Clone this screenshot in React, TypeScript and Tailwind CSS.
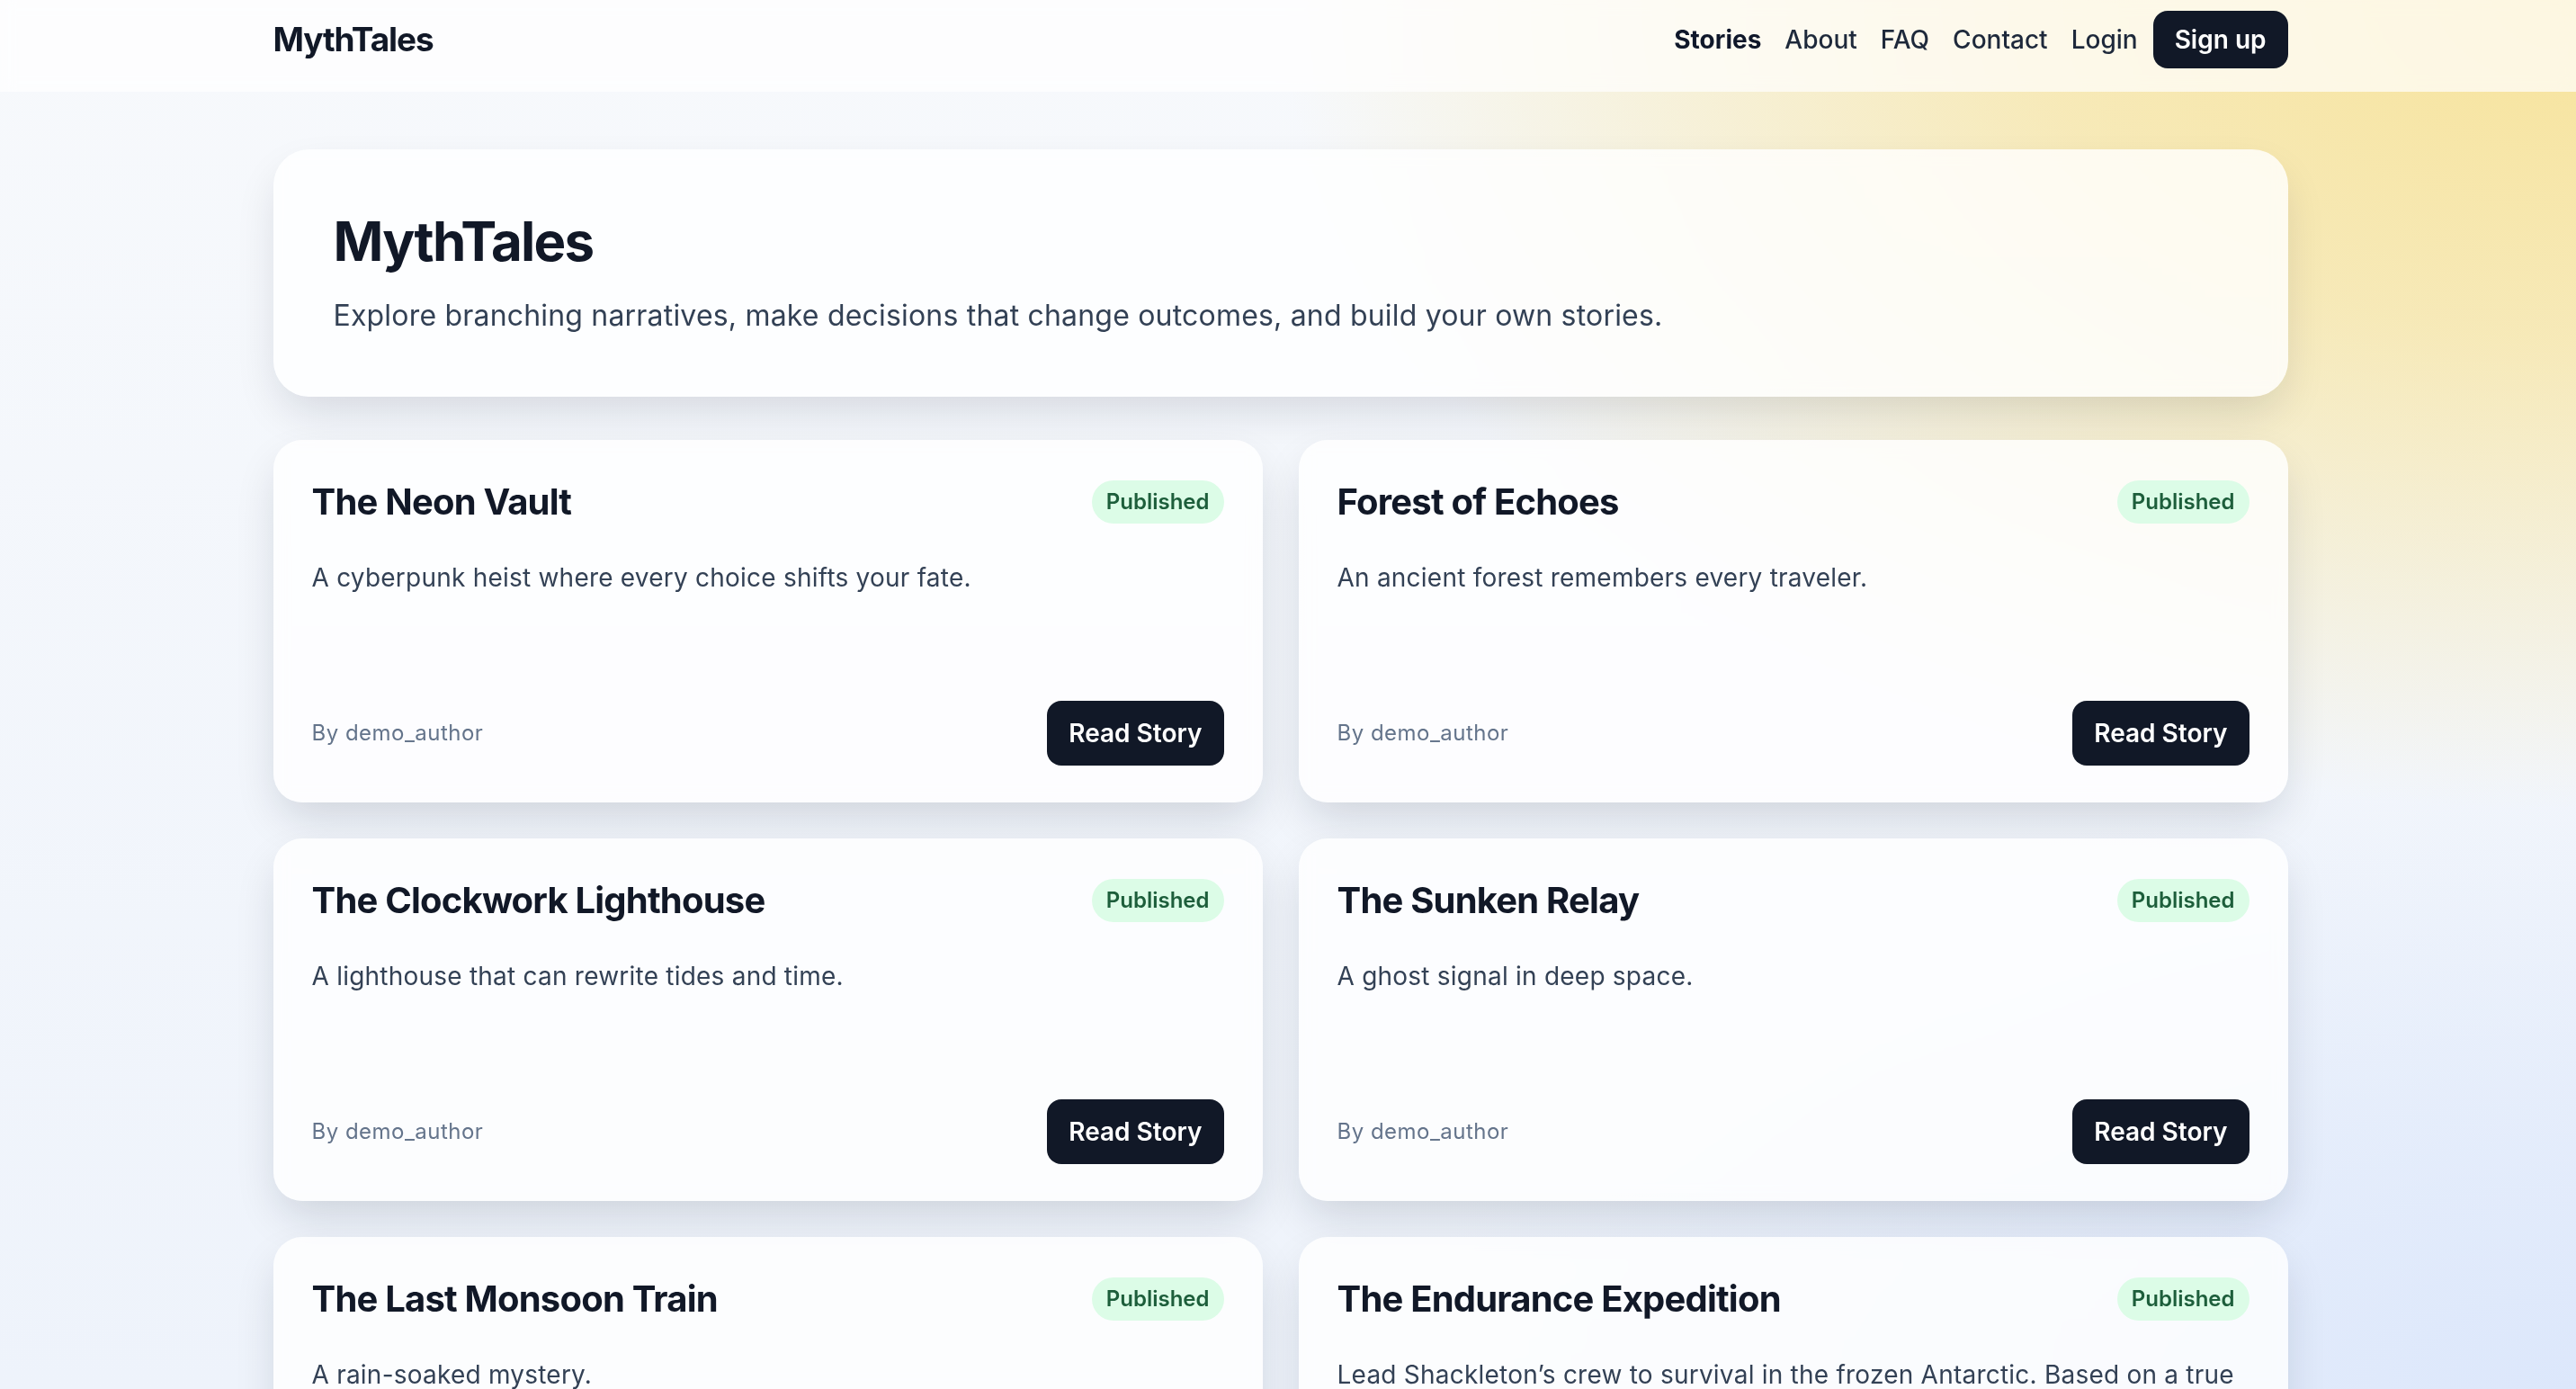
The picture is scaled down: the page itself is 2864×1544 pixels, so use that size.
import { ReactNode } from "react";

type Story = {
  title: string;
  blurb: string;
  author: string;
};

const stories: Story[] = [
  {
    title: "The Neon Vault",
    blurb: "A cyberpunk heist where every choice shifts your fate.",
    author: "demo_author",
  },
  {
    title: "Forest of Echoes",
    blurb: "An ancient forest remembers every traveler.",
    author: "demo_author",
  },
  {
    title: "The Clockwork Lighthouse",
    blurb: "A lighthouse that can rewrite tides and time.",
    author: "demo_author",
  },
  {
    title: "The Sunken Relay",
    blurb: "A ghost signal in deep space.",
    author: "demo_author",
  },
  {
    title: "The Last Monsoon Train",
    blurb: "A rain-soaked mystery.",
    author: "demo_author",
  },
  {
    title: "The Endurance Expedition",
    blurb:
      "Lead Shackleton’s crew to survival in the frozen Antarctic. Based on a true story of courage, endurance and hope.",
    author: "demo_author",
  },
];

const navLinks = ["About", "FAQ", "Contact", "Login"];

function Container({ children }: { children: ReactNode }) {
  return <div className="mx-auto w-[2240px]">{children}</div>;
}

function StoryCard({ story }: { story: Story }) {
  return (
    <article className="flex min-h-[403px] flex-col rounded-[32px] bg-white/80 px-[43px] pb-[41px] pt-[41px] shadow-[0_22px_50px_-8px_rgba(15,23,42,0.16)] backdrop-blur">
      <div className="flex items-center justify-between gap-6">
        <h2 className="text-[40px] font-bold leading-[56px] tracking-[-0.02em] text-[#111827]">
          {story.title}
        </h2>
        <span className="shrink-0 rounded-full bg-[#dcfce7] px-4 py-2 text-[24px] font-semibold leading-[32px] text-[#1d5e3b]">
          Published
        </span>
      </div>
      <p className="mt-[36px] text-[28px] leading-[40px] tracking-[0.008em] text-[#334155]">
        {story.blurb}
      </p>
      <div className="mt-auto flex items-center justify-between pt-8">
        <span className="text-[24px] leading-[32px] tracking-[0.02em] text-[#64748b]">
          By {story.author}
        </span>
        <a
          href="#"
          className="rounded-[16px] bg-[#111827] px-6 py-4 text-[28px] font-semibold leading-[40px] text-white">
          Read Story
        </a>
      </div>
    </article>
  );
}

export default function App() {
  return (
    <div className="min-h-screen w-full bg-[radial-gradient(ellipse_2000px_1250px_at_100%_0%,#f7e39b_0%,rgba(247,227,155,0.7)_30%,rgba(247,227,155,0)_72%),radial-gradient(ellipse_1800px_950px_at_100%_100%,#dce7fb_0%,rgba(220,231,251,0)_72%),linear-gradient(180deg,#f7f9fc_0%,#eef3fb_100%)] bg-fixed pr-[17px] font-['Inter','Noto_Sans',sans-serif] text-[#111827]">
      {/* top bar */}
      <header className="mr-[-17px] bg-white/70 pb-[26px] pr-[17px] pt-[12px] backdrop-blur">
        <Container>
          <nav className="flex items-center justify-between">
            <a
              href="#"
              className="text-[37px] font-bold leading-[56px] tracking-[-0.03em] text-[#111827]">
              MythTales
            </a>
            <div className="flex items-center gap-[17px]">
              <div className="flex items-center gap-[26px] text-[28px] leading-[40px]">
                <a href="#" className="font-bold text-[#0f172a]">
                  Stories
                </a>
                {navLinks.map((link) => (
                  <a key={link} href="#" className="font-medium text-[#1e293b]">
                    {link}
                  </a>
                ))}
              </div>
              <a
                href="#"
                className="rounded-[16px] bg-[#111827] px-6 py-3 text-[28px] font-semibold leading-[40px] text-white">
                Sign up
              </a>
            </div>
          </nav>
        </Container>
      </header>

      <main className="pb-24 pt-[64px]">
        <Container>
          {/* intro */}
          <section className="rounded-[40px] bg-white/80 px-[67px] py-[66px] shadow-[0_22px_50px_-8px_rgba(15,23,42,0.14)] backdrop-blur">
            <h1 className="text-[60px] font-bold leading-[72px] tracking-[-0.03em] text-[#111827]">
              MythTales
            </h1>
            <p className="mt-[23px] text-[32px] leading-[48px] tracking-[0.006em] text-[#334155]">
              Explore branching narratives, make decisions that change outcomes,
              and build your own stories.
            </p>
          </section>

          {/* story list */}
          <section className="mt-[48px] grid grid-cols-2 gap-[40px]">
            {stories.map((story) => (
              <StoryCard key={story.title} story={story} />
            ))}
          </section>
        </Container>
      </main>
    </div>
  );
}
